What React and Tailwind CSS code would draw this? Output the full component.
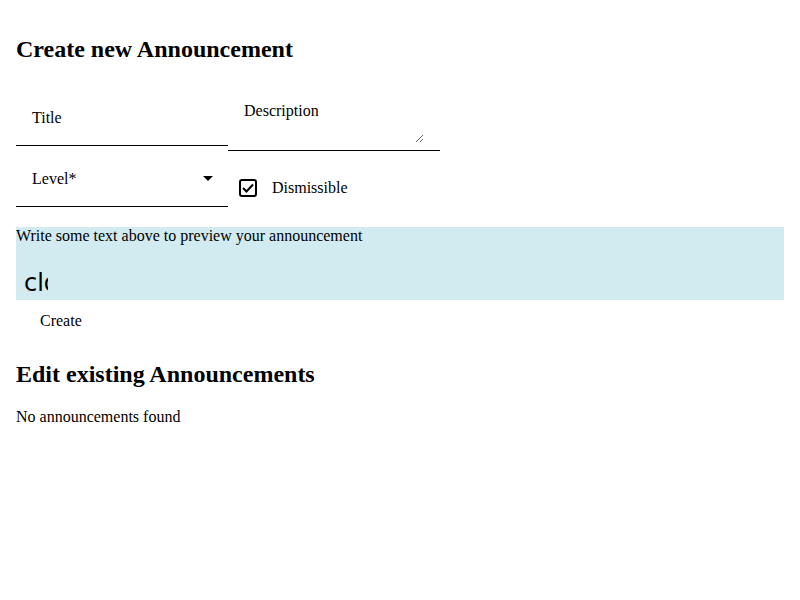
import React from "react";

export default function App() {
  return (
    <div className="w-[800px] h-[600px] bg-white text-black px-4 text-[16px]" style={{ fontFamily: '"Liberation Serif", serif' }}>
      <h2 className="pt-[35px] text-[24px] leading-[28px] font-bold">Create new Announcement</h2>
      <div className="mt-[21px] flex items-start">
        <div className="w-[212px] h-[62px] border-b border-black pt-[22px] px-4 leading-[24px]">Title</div>
        <div className="w-[212px] border-b border-black pl-4 pr-4 pt-[15px] pb-[7px] flex">
          <textarea
            className="w-full h-[44px] leading-[24px] outline-none p-0 m-0 border-0 bg-transparent placeholder:text-black block"
            placeholder="Description"
            style={{ fontFamily: '"Liberation Serif", serif', fontSize: 16 }}
          />
        </div>
      </div>
      <div className="flex items-start">
        <div className="w-[212px] h-[56px] border-b border-black pt-[16px] pl-4 pr-[16px] leading-[24px] flex justify-between">
          <span>Level*</span>
          <svg width="10" height="5" viewBox="0 0 10 5" className="mt-[9px] mr-[-1px]">
            <path d="M0 0 L10 0 L5 5 Z" fill="black" />
          </svg>
        </div>
        <label className="flex items-center h-[24px] mt-[25px] pl-[11px]">
          <span className="w-[18px] h-[18px] border-2 border-black rounded-[3px] flex items-center justify-center">
            <svg width="12" height="10" viewBox="0 0 12 10">
              <path d="M1 5 L4.5 8.5 L11 1.5" fill="none" stroke="black" strokeWidth="2" />
            </svg>
          </span>
          <span className="ml-[15px] leading-[24px]">Dismissible</span>
        </label>
      </div>
      <div className="mt-[20px] bg-[#d1ebf0] h-[73px]">
        <div className="leading-[18px]">Write some text above to preview your announcement</div>
        <div
          className="ml-2 mt-[26px] w-[24px] h-[24px] overflow-hidden whitespace-nowrap text-[24px] leading-[24px]"
          style={{ fontFamily: '"DejaVu Sans", sans-serif' }}
        >
          close
        </div>
      </div>
      <div className="pl-6 pt-[12px] leading-[18px]">Create</div>
      <h2 className="mt-[30px] text-[24px] leading-[28px] font-bold">Edit existing Announcements</h2>
      <p className="mt-[20px] leading-[18px]">No announcements found</p>
    </div>
  );
}
